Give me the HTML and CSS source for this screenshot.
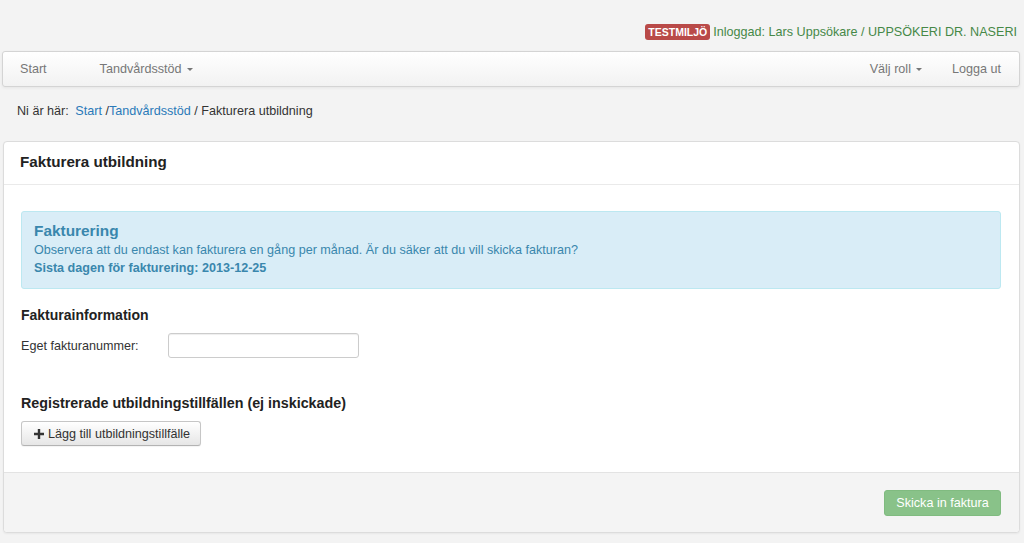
FILE: index.html
```html
<!DOCTYPE html>
<html lang="sv">
<head>
<meta charset="utf-8">
<title>Fakturera utbildning</title>
<link rel="stylesheet" href="styles.css">
</head>
<body>
<div class="page">
  <header class="topbar">
    <span class="badge">TESTMILJÖ</span>
    <span class="user">Inloggad: Lars Uppsökare / UPPSÖKERI DR. NASERI</span>
  </header>
  <nav class="navbar">
    <ul class="nav">
      <li><a class="nav-first" href="#">Start</a></li>
      <li><a href="#">Tandvårdsstöd <span class="caret"></span></a></li>
    </ul>
    <ul class="nav nav-right">
      <li><a href="#">Välj roll <span class="caret"></span></a></li>
      <li><a class="nav-last" href="#">Logga ut</a></li>
    </ul>
  </nav>
  <div class="breadcrumb">
    <span class="bc-label">Ni är här:</span>
    <a href="#">Start</a> /<a href="#">Tandvårdsstöd</a> / <span>Fakturera utbildning</span>
  </div>
  <section class="panel">
    <div class="panel-heading">Fakturera utbildning</div>
    <div class="panel-body">
      <div class="alert">
        <h4>Fakturering</h4>
        <p>Observera att du endast kan fakturera en gång per månad. Är du säker att du vill skicka fakturan?</p>
        <p class="strong">Sista dagen för fakturering: 2013-12-25</p>
      </div>
      <h3 class="sub">Fakturainformation</h3>
      <div class="form-row">
        <label for="fnr">Eget fakturanummer:</label>
        <input id="fnr" type="text">
      </div>
      <h3 class="sub2">Registrerade utbildningstillfällen (ej inskickade)</h3>
      <button class="btn" type="button"><svg width="10" height="10" viewBox="0 0 10 10"><path d="M3.8 0h2.4v3.8H10v2.4H6.2V10H3.8V6.2H0V3.8h3.8z" fill="#333"/></svg> Lägg till utbildningstillfälle</button>
    </div>
    <div class="panel-footer">
      <button class="btn-success" type="button" disabled>Skicka in faktura</button>
    </div>
  </section>
</div>
</body>
</html>
```
FILE: styles.css
```css
html, body {
  margin: 0;
  padding: 0;
  background: #f3f3f3;
  font-family: "Liberation Sans", Arial, sans-serif;
  font-size: 12.6px;
  color: #333;
}
.page {
  padding: 0 4px 0 2px;
}
.topbar {
  height: 51px;
  display: flex;
  justify-content: flex-end;
  align-items: center;
  padding-top: 13px;
  box-sizing: border-box;
  padding-right: 3px;
}
.badge {
  background: #b94a48;
  color: #fff;
  font-weight: bold;
  font-size: 10.5px;
  padding: 2px 3px 1px;
  border-radius: 3px;
  margin-right: 3px;
  line-height: 13px;
}
.user {
  color: #468847;
}
.navbar {
  height: 36px;
  box-sizing: border-box;
  border: 1px solid #d4d4d4;
  border-radius: 3px;
  background: linear-gradient(#ffffff, #f2f2f2);
  box-shadow: 0 1px 3px rgba(0,0,0,0.06);
  display: flex;
  justify-content: space-between;
  align-items: stretch;
}
.nav {
  list-style: none;
  margin: 0;
  padding: 0;
  display: flex;
}
.nav a {
  display: flex;
  align-items: center;
  height: 100%;
  padding: 0 26px;
  color: #777;
  text-decoration: none;
}
.nav a.nav-first { padding-left: 17px; padding-right: 27px; }
.nav a.nav-last { padding-right: 18px; padding-left: 18px; }
.nav-right a { padding: 0 12px; }
.caret {
  display: inline-block;
  width: 0;
  height: 0;
  margin-left: 5px;
  border-left: 3px solid transparent;
  border-right: 3px solid transparent;
  border-top: 3px solid #777;
  vertical-align: middle;
}
.breadcrumb {
  padding: 17px 0 0 15px;
  height: 54px;
  box-sizing: border-box;
  line-height: 14px;
}
.bc-label { margin-right: 3px; }
.breadcrumb a {
  color: #2a7ab9;
  text-decoration: none;
}
.panel {
  margin-left: 1px;
  background: #fff;
  border: 1px solid #dcdcdc;
  border-radius: 4px;
  box-shadow: 0 1px 2px rgba(0,0,0,0.05);
  margin-bottom: 10px;
}
.panel-heading {
  height: 43px;
  box-sizing: border-box;
  padding: 11px 0 0 16px;
  font-size: 15.2px;
  font-weight: bold;
  color: #222;
  border-bottom: 1px solid #eaeaea;
}
.panel-body {
  padding: 26px 18px 26px 17px;
}
.alert {
  background: #d9edf7;
  border: 1px solid #bce8f1;
  border-radius: 3px;
  color: #3a87ad;
  padding: 10px 12px 11px;
}
.alert h4 {
  margin: 0 0 1px;
  font-size: 15.4px;
  font-weight: bold;
  line-height: 18px;
}
.alert p {
  margin: 0;
  line-height: 18px;
}
.alert p.strong { font-weight: bold; }
.sub {
  margin: 19px 0 0;
  font-size: 14px;
  font-weight: bold;
  line-height: 15px;
  color: #222;
}
.form-row {
  display: flex;
  align-items: center;
  margin-top: 10px;
}
.form-row label {
  width: 147px;
}
.form-row input {
  width: 191px;
  height: 25px;
  box-sizing: border-box;
  border: 1px solid #ccc;
  border-radius: 3px;
  box-shadow: inset 0 1px 1px rgba(0,0,0,0.07);
}
.sub2 {
  margin: 37px 0 0;
  font-size: 14.3px;
  font-weight: bold;
  line-height: 16px;
  color: #222;
}
.btn {
  margin-top: 10px;
  height: 25px;
  padding: 0 10px 0 12px;
  font-family: inherit;
  font-size: 12.6px;
  color: #333;
  border: 1px solid #c6c6c6;
  border-bottom-color: #b3b3b3;
  border-radius: 3px;
  background: linear-gradient(#ffffff, #e6e6e6);
  box-shadow: 0 1px 1px rgba(0,0,0,0.05);
  display: inline-flex;
  align-items: center;
  gap: 4px;
}
.panel-footer {
  background: #f4f4f4;
  border-top: 1px solid #e3e3e3;
  border-radius: 0 0 4px 4px;
  height: 60px;
  box-sizing: border-box;
  display: flex;
  justify-content: flex-end;
  align-items: center;
  padding-right: 18px;
  padding-top: 1px;
}
.btn-success {
  height: 26px;
  width: 117px;
  background: #89c289;
  color: #fff;
  border: 1px solid #80bb80;
  border-radius: 3px;
  font-family: inherit;
  font-size: 12.6px;
}
```
